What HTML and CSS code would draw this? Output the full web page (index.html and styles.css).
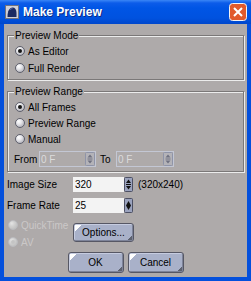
FILE: index.html
```html
<!DOCTYPE html>
<html>
<head>
<meta charset="utf-8">
<link rel="stylesheet" href="styles.css">
</head>
<body>
<div class="window">
  <div class="titlebar">
    <svg class="app-icon" width="14" height="14" viewBox="0 0 14 14"><rect x="0.5" y="0.5" width="13" height="13" fill="#cfd0d8" stroke="#70727e"/><path d="M2.5 12 C2.5 6 4.5 2.5 7.5 2.5 C10 2.5 11.5 4.5 11.5 8 L11.5 12 Z" fill="#1b2a62"/><path d="M5 5 C5.5 4 6.5 3.6 7.5 3.6" stroke="#5a6fb0" fill="none"/></svg>
    <span class="title">Make Preview</span>
    <svg class="close" width="18" height="18" viewBox="0 0 18 18"><rect x="0.5" y="0.5" width="17" height="17" rx="3" fill="#e15a2c" stroke="#f4f4f4"/><path d="M5 5 L13 13 M13 5 L5 13" stroke="#fff" stroke-width="2"/></svg>
  </div>
  <div class="dialog">
    <fieldset class="group g1">
      <legend>Preview Mode</legend>
      <div class="radio"><span class="dot on"></span>As Editor</div>
      <div class="radio"><span class="dot"></span>Full Render</div>
    </fieldset>
    <fieldset class="group g2">
      <legend>Preview Range</legend>
      <div class="radio"><span class="dot on"></span>All Frames</div>
      <div class="radio"><span class="dot"></span>Preview Range</div>
      <div class="radio"><span class="dot"></span>Manual</div>
      <div class="range-row">
        <span class="lbl-from">From</span>
        <span class="dfield f1"><span class="dval">0 F</span>
          <svg class="dspin" width="10" height="14" viewBox="0 0 10 14"><rect x="0.5" y="0.5" width="9" height="13" rx="1" fill="#b4b3b8" stroke="#8f94a8"/><path d="M5 2.5 L7.5 5.5 H2.5 Z" fill="#6e7080"/><path d="M5 11.5 L7.5 8.5 H2.5 Z" fill="#6e7080"/><line x1="2.5" y1="7" x2="7.5" y2="7" stroke="#6e7080"/></svg>
        </span>
        <span class="lbl-to">To</span>
        <span class="dfield f2"><span class="dval">0 F</span>
          <svg class="dspin" width="10" height="14" viewBox="0 0 10 14"><rect x="0.5" y="0.5" width="9" height="13" rx="1" fill="#b4b3b8" stroke="#8f94a8"/><path d="M5 2.5 L7.5 5.5 H2.5 Z" fill="#6e7080"/><path d="M5 11.5 L7.5 8.5 H2.5 Z" fill="#6e7080"/><line x1="2.5" y1="7" x2="7.5" y2="7" stroke="#6e7080"/></svg>
        </span>
      </div>
    </fieldset>
    <div class="field-row r1">
      <span class="lbl">Image Size</span>
      <span class="value">320</span>
      <svg class="spinner" width="9" height="15" viewBox="0 0 9 15"><rect x="0.5" y="0.5" width="8" height="14" rx="1" fill="#9aa2bd" stroke="#4c5064"/><path d="M4.5 2.5 L7 6 H2 Z" fill="#111"/><path d="M4.5 12.5 L7 9 H2 Z" fill="#111"/><line x1="2" y1="7.5" x2="7" y2="7.5" stroke="#111"/></svg>
      <span class="note">(320x240)</span>
    </div>
    <div class="field-row r2">
      <span class="lbl">Frame Rate</span>
      <span class="value">25</span>
      <svg class="spinner" width="9" height="15" viewBox="0 0 9 15"><rect x="0.5" y="0.5" width="8" height="14" rx="1" fill="#9aa2bd" stroke="#4c5064"/><path d="M4.5 3 L7 7.5 L4.5 12 L2 7.5 Z" fill="#111"/></svg>
    </div>
    <div class="format">
      <div class="format-radios">
        <div class="radio disabled"><span class="dot dis"></span>QuickTime</div>
        <div class="radio disabled"><span class="dot dis on"></span>AV</div>
      </div>
      <button class="btn options">Options...</button>
    </div>
    <div class="actions">
      <button class="btn">OK</button>
      <button class="btn">Cancel</button>
    </div>
  </div>
</div>
</body>
</html>
```
FILE: styles.css
```css
* { box-sizing: border-box; }
html, body { margin: 0; padding: 0; }
body {
  font-family: "Liberation Sans", Arial, sans-serif;
  font-size: 10px;
  color: #000;
  background: #fff;
}
.window {
  width: 251px;
  height: 281px;
  background: #0450dc;
  display: flex;
  flex-direction: column;
}
.titlebar {
  height: 24px;
  flex: none;
  display: flex;
  align-items: center;
  padding-left: 5px;
  background: linear-gradient(#3a86f6 0, #0c5ce9 3px, #0055e5 8px, #0052df 18px, #0047cc 24px);
}
.app-icon { display: block; }
.title {
  margin-left: 4px;
  color: #fff;
  font-weight: bold;
  font-size: 12px;
  text-shadow: 1px 1px 0 #0b2d86;
}
.close { margin-left: auto; margin-right: 4px; display: block; }

.dialog {
  flex: 1;
  margin: 0 4px 4px 4px;
  background: #aeaaaa;
  padding: 5px 3px 0 3px;
  display: flex;
  flex-direction: column;
}
.group {
  margin: 0;
  min-width: 0;
  padding: 1px 6px 3px 6px;
  border: 1px solid #7b7878;
  box-shadow: inset 1px 1px 0 #ececec, 1px 1px 0 #ececec;
}
.group legend {
  padding: 0 1px;
  height: 13px;
  line-height: 13px;
  background: #aeaaaa;
}
.g1 .radio + .radio { margin-top: 1px; }
.g2 { margin-top: 5px; padding-bottom: 4px; }

.radio {
  display: flex;
  align-items: center;
  height: 16px;
  gap: 3px;
  padding-left: 1px;
}
.dot {
  width: 10px;
  height: 10px;
  border-radius: 50%;
  border: 1px solid #5e606c;
  background: radial-gradient(circle at 35% 30%, #ffffff 0, #e6e6ea 35%, #9c9ca6 100%);
  display: flex;
  align-items: center;
  justify-content: center;
  flex: none;
}
.dot.on::after {
  content: "";
  width: 4px;
  height: 4px;
  border-radius: 50%;
  background: #141414;
}
.radio.disabled { color: #cbc8c8; }
.dot.dis {
  border-color: #bcbcc0;
  background: radial-gradient(circle at 35% 30%, #e4e4e4 0, #cfcfcf 40%, #b8b8b8 100%);
}
.dot.dis.on::after { background: #c4c4c4; }

.range-row {
  display: flex;
  align-items: center;
  margin-top: 4px;
  height: 16px;
}
.lbl-from { width: 25px; }
.lbl-to { margin-left: 4px; width: 16px; }
.dfield {
  display: flex;
  align-items: center;
  justify-content: space-between;
  height: 16px;
  border: 1px solid #c3c7d4;
  padding-left: 1px;
}
.f1 { width: 57px; }
.f2 { width: 58px; }
.dval { color: #dcdcdc; }
.dspin { display: block; }

.field-row {
  display: flex;
  align-items: center;
  height: 15px;
}
.r1 { margin-top: 5px; }
.r2 { margin-top: 6px; }
.field-row .lbl { width: 66px; }
.field-row .value {
  width: 51px;
  height: 15px;
  line-height: 15px;
  background: #f3f3f3;
  padding-left: 2px;
}
.spinner { display: block; }
.note { margin-left: 5px; }

.format { display: flex; margin-top: 4px; }
.format-radios {
  width: 66px;
  display: flex;
  flex-direction: column;
  gap: 1px;
}
.btn {
  font: inherit;
  font-size: 10px;
  color: #000;
  background: #a9b1c9;
  border: 1px solid #565764;
  border-radius: 3px;
  padding: 0;
  position: relative;
  box-shadow: inset -1px -1px 0 #7d8399, inset 1px 1px 0 #c6cce0;
}
.btn::before {
  content: "";
  position: absolute;
  left: 1px;
  top: 1px;
  width: 7px;
  height: 7px;
  background: linear-gradient(135deg, #ffffff 45%, transparent 50%);
}
.btn::after {
  content: "";
  position: absolute;
  right: 1px;
  bottom: 1px;
  width: 5px;
  height: 5px;
  background: linear-gradient(315deg, #5d616e 45%, transparent 50%);
}
.options { margin-top: 6px; width: 61px; height: 19px; }
.actions {
  display: flex;
  justify-content: center;
  gap: 4px;
  margin-top: 2px;
}
.actions .btn { width: 56px; height: 21px; }
```
